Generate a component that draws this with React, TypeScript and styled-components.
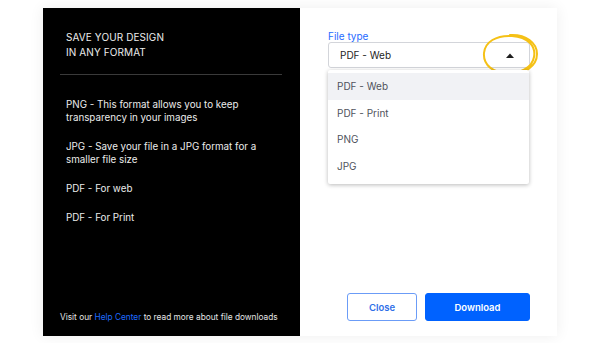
import React from "react";
import styled, { createGlobalStyle } from "styled-components";

const Global = createGlobalStyle`
  html, body { margin: 0; padding: 0; background: #ffffff; }
  body { font-family: Inter, "Noto Sans", sans-serif; -webkit-font-smoothing: antialiased; }
  * { box-sizing: border-box; }
`;

const Page = styled.div`
  width: 600px;
  height: 343px;
  padding: 8px 0 0 43px;
`;

const Card = styled.div`
  width: 514px;
  height: 328px;
  display: flex;
  background: #fff;
  box-shadow: 0 0 14px rgba(0, 0, 0, 0.07);
`;

const Side = styled.div`
  width: 257px;
  background: #000;
  color: #ececec;
  display: flex;
  flex-direction: column;
  padding: 22px 18px 13px 17px;
`;

const Title = styled.div`
  padding-left: 6px;
  font-size: 10px;
  line-height: 15px;
  letter-spacing: 0.1px;
`;

const Divider = styled.hr`
  border: none;
  height: 1px;
  background: #3a3a3a;
  margin: 14px 0 23px;
`;

const List = styled.div`
  display: flex;
  flex-direction: column;
  gap: 16px;
  padding-left: 6px;
`;

const Item = styled.p`
  margin: 0;
  font-size: 9.8px;
  line-height: 13px;
  max-width: 200px;
`;

const Footer = styled.div`
  margin-top: auto;
  font-size: 8.3px;
  line-height: 12px;
  white-space: nowrap;
  color: #e4e4e4;
`;

const Link = styled.span`
  color: #1f6bff;
`;

const Main = styled.div`
  flex: 1;
  display: flex;
  flex-direction: column;
  padding: 23px 27px 15px 28px;
`;

const Label = styled.div`
  font-size: 10px;
  line-height: 10px;
  margin-bottom: 1px;
  color: #1f6bff;
`;

const SelectWrap = styled.div`
  position: relative;
`;

const Select = styled.div`
  height: 26px;
  border: 1px solid #d3d5da;
  border-radius: 3px;
  display: flex;
  align-items: center;
  justify-content: space-between;
  padding: 0 15px 0 11px;
  font-size: 10px;
  color: #1e1e1e;
`;

const Circle = styled.svg`
  position: absolute;
  right: -10px;
  top: -10px;
`;

const Menu = styled.div`
  position: absolute;
  left: 0;
  right: 1px;
  top: 28px;
  background: #fff;
  border-radius: 2px;
  box-shadow: 0 1px 4px rgba(0, 0, 0, 0.28);
  padding: 3px 0 5px;
`;

const Option = styled.div<{ $active?: boolean }>`
  height: 26.5px;
  display: flex;
  align-items: center;
  padding-left: 9px;
  font-size: 10px;
  color: #50535c;
  background: ${(p) => (p.$active ? "#f1f2f5" : "#fff")};
`;

const Actions = styled.div`
  margin-top: auto;
  display: flex;
  justify-content: flex-end;
  gap: 8px;
`;

const Button = styled.button<{ $primary?: boolean }>`
  height: 28px;
  width: ${(p) => (p.$primary ? "105px" : "70px")};
  border-radius: 3px;
  font-family: Inter, sans-serif;
  font-size: 9.5px;
  font-weight: 600;
  border: 1px solid ${(p) => (p.$primary ? "#0062ff" : "#6b9cf7")};
  background: ${(p) => (p.$primary ? "#0062ff" : "#fff")};
  color: ${(p) => (p.$primary ? "#fff" : "#2f6fe8")};
`;

export default function App() {
  return (
    <>
      <Global />
      <Page>
        <Card>
          <Side>
            <Title>
              SAVE YOUR DESIGN
              <br />
              IN ANY FORMAT
            </Title>
            <Divider />
            <List>
              <Item>PNG - This format allows you to keep transparency in your images</Item>
              <Item>JPG - Save your file in a JPG format for a smaller file size</Item>
              <Item>PDF - For web</Item>
              <Item>PDF - For Print</Item>
            </List>
            <Footer>
              Visit our <Link>Help Center</Link> to read more about file downloads
            </Footer>
          </Side>
          <Main>
            <Label>File type</Label>
            <SelectWrap>
              <Select>
                <span>PDF - Web</span>
                <svg width="8" height="5" viewBox="0 0 8 5">
                  <path d="M0 5 L4 0.5 L8 5 Z" fill="#1e1e1e" />
                </svg>
              </Select>
              <Circle width="60" height="46" viewBox="0 0 60 46">
                <path
                  d="M30 3 C46 2 57 11 57 22 C57 34 44 43 29 42 C13 41 3 33 4 21 C5 10 16 3 32 4 C48 5 56 14 54 25 C52 36 40 42 26 41"
                  fill="none"
                  stroke="#f5c116"
                  strokeWidth="2"
                  strokeLinecap="round"
                />
              </Circle>
              <Menu>
                <Option $active>PDF - Web</Option>
                <Option>PDF - Print</Option>
                <Option>PNG</Option>
                <Option>JPG</Option>
              </Menu>
            </SelectWrap>
            <Actions>
              <Button>Close</Button>
              <Button $primary>Download</Button>
            </Actions>
          </Main>
        </Card>
      </Page>
    </>
  );
}
